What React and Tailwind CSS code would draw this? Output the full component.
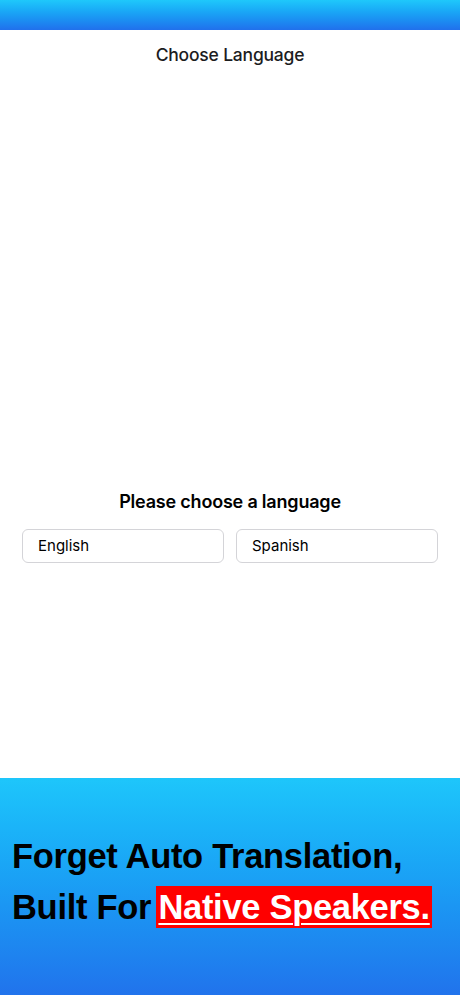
export default function App() {
  return (
    <div className="w-[460px] h-[995px] flex flex-col bg-white overflow-hidden" style={{ fontFamily: "Inter, 'Noto Sans', sans-serif" }}>
      {/* status strip */}
      <div className="h-[30px] shrink-0 bg-gradient-to-b from-[#1fc8fb] to-[#2170ec]" />

      {/* app screen */}
      <div className="flex-1 flex flex-col bg-white">
        <div className="h-[48px] pt-[3px] flex items-center justify-center text-[17.5px] font-medium text-[#1c1c1e] tracking-[-0.2px]">
          Choose Language
        </div>
        <div className="flex flex-col items-center pt-[411px]">
          <div className="text-[18px] leading-[26px] font-semibold text-black tracking-[-0.2px]">Please choose a language</div>
          <div className="w-full grid grid-cols-2 gap-3 px-[22px] mt-[14px]">
            <div className="h-[34px] rounded-md border border-[#d4d4d8] flex items-center px-[15px] text-[15px] text-black">English</div>
            <div className="h-[34px] rounded-md border border-[#d4d4d8] flex items-center px-[15px] text-[15px] text-black">Spanish</div>
          </div>
        </div>
      </div>

      {/* promo banner */}
      <div className="h-[217px] shrink-0 bg-gradient-to-b from-[#1ec6fb] to-[#2173ec] flex flex-col justify-center pl-[12px] pb-[10px]" style={{ fontFamily: "'Liberation Sans', Arial, sans-serif" }}>
        <div className="text-[34.5px] font-bold text-black leading-[51px] tracking-[-0.3px]">
          <div>Forget Auto Translation,</div>
          <div>
            Built For{" "}
            <span className="-ml-[4px] bg-[#fe0000] text-white underline decoration-[2px] underline-offset-[4px] px-[2px] py-[2px]">Native Speakers.</span>
          </div>
        </div>
      </div>
    </div>
  );
}
